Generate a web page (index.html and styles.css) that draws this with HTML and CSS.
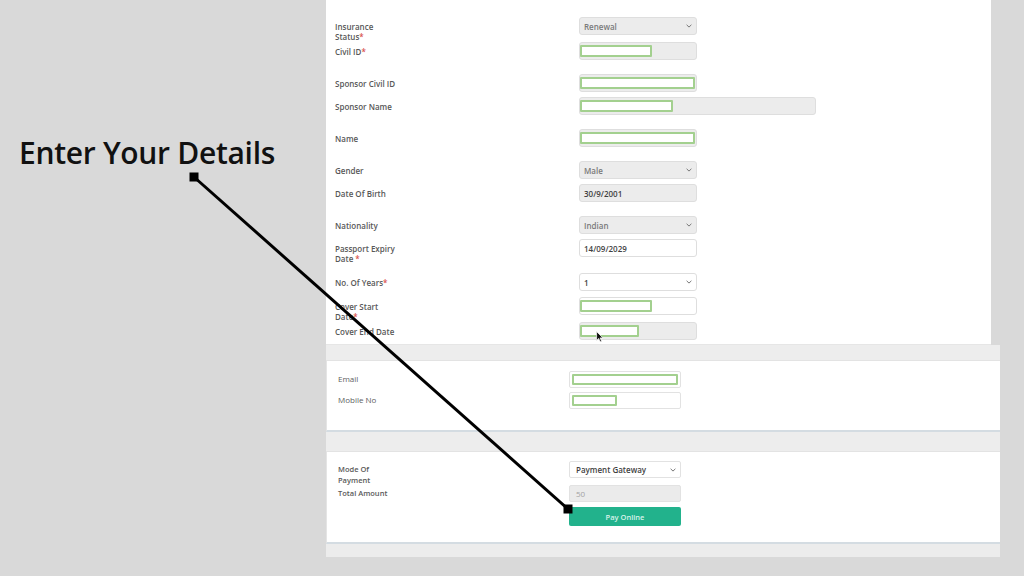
FILE: index.html
```html
<!DOCTYPE html>
<html lang="en">
<head>
<meta charset="utf-8">
<title>Insurance Renewal</title>
<link rel="stylesheet" href="styles.css">
</head>
<body>
<div class="screen">
  <aside class="note">
    <h1 class="note-title">Enter Your Details</h1>
  </aside>

  <main class="form-col">
    <section class="panel">
      <div class="row mb7">
        <label class="lbl">Insurance<br>Status<span class="req">*</span></label>
        <div class="field is-off"><span class="val muted">Renewal</span><svg class="chev" viewBox="0 0 6 4"><path d="M0.6 0.8 L3 3.1 L5.4 0.8"/></svg></div>
      </div>
      <div class="row mb14">
        <label class="lbl">Civil ID<span class="req">*</span></label>
        <div class="field is-off"><span class="fill w72"></span></div>
      </div>
      <div class="row mb5">
        <label class="lbl">Sponsor Civil ID</label>
        <div class="field is-off"><span class="fill w115"></span></div>
      </div>
      <div class="row mb14">
        <label class="lbl">Sponsor Name</label>
        <div class="field is-off wide"><span class="fill w93"></span></div>
      </div>
      <div class="row mb14">
        <label class="lbl">Name</label>
        <div class="field is-off"><span class="fill w115"></span></div>
      </div>
      <div class="row mb5">
        <label class="lbl">Gender</label>
        <div class="field is-off"><span class="val muted">Male</span><svg class="chev" viewBox="0 0 6 4"><path d="M0.6 0.8 L3 3.1 L5.4 0.8"/></svg></div>
      </div>
      <div class="row mb14">
        <label class="lbl">Date Of Birth</label>
        <div class="field is-off"><span class="val">30/9/2001</span></div>
      </div>
      <div class="row mb5">
        <label class="lbl">Nationality</label>
        <div class="field is-off"><span class="val muted">Indian</span><svg class="chev" viewBox="0 0 6 4"><path d="M0.6 0.8 L3 3.1 L5.4 0.8"/></svg></div>
      </div>
      <div class="row mb16">
        <label class="lbl">Passport Expiry<br>Date <span class="req">*</span></label>
        <div class="field"><span class="val">14/09/2029</span></div>
      </div>
      <div class="row mb6">
        <label class="lbl">No. Of Years<span class="req">*</span></label>
        <div class="field"><span class="val">1</span><svg class="chev" viewBox="0 0 6 4"><path d="M0.6 0.8 L3 3.1 L5.4 0.8"/></svg></div>
      </div>
      <div class="row mb7">
        <label class="lbl">Cover Start<br>Date<span class="req">*</span></label>
        <div class="field"><span class="fill w72"></span></div>
      </div>
      <div class="row">
        <label class="lbl">Cover End Date</label>
        <div class="field is-off"><span class="fill w59"></span></div>
      </div>
    </section>

    <section class="card">
      <div class="card-head"></div>
      <div class="card-body contact">
        <div class="crow mb4">
          <label class="clbl">Email</label>
          <div class="cfield"><span class="fill w106"></span></div>
        </div>
        <div class="crow">
          <label class="clbl">Mobile No</label>
          <div class="cfield"><span class="fill w45"></span></div>
        </div>
      </div>
    </section>

    <section class="card">
      <div class="card-head tall"></div>
      <div class="card-body payment">
        <div class="crow mb7">
          <label class="clbl strong">Mode Of<br>Payment</label>
          <div class="cfield"><span class="val">Payment Gateway</span><svg class="chev" viewBox="0 0 6 4"><path d="M0.6 0.8 L3 3.1 L5.4 0.8"/></svg></div>
        </div>
        <div class="crow mb5">
          <label class="clbl strong">Total Amount</label>
          <div class="cfield is-off"><span class="val faint">50</span></div>
        </div>
        <div class="crow btn-row">
          <span class="clbl"></span>
          <button class="pay-btn" type="button">Pay Online</button>
        </div>
      </div>
      <div class="card-foot"></div>
    </section>
  </main>

  <!-- callout connector from the title to the pay button -->
  <svg class="connector" viewBox="0 0 1024 576" width="1024" height="576">
    <line x1="194" y1="177" x2="568" y2="509" stroke="#000" stroke-width="3"/>
    <rect x="189.5" y="172.5" width="9" height="9" fill="#000"/>
    <rect x="563.5" y="504.5" width="9" height="9" fill="#000"/>
  </svg>

  <!-- mouse pointer -->
  <svg class="pointer" viewBox="0 0 8 12" width="8" height="12">
    <path d="M0.6 0.6 L0.6 9.4 L2.7 7.4 L4.2 10.8 L5.6 10.2 L4.1 6.9 L6.9 6.9 Z" fill="#111" stroke="#fff" stroke-width="0.7"/>
  </svg>
</div>
</body>
</html>
```

FILE: styles.css
```css
* { box-sizing: border-box; }

html, body {
  margin: 0;
  padding: 0;
}

body {
  width: 1024px;
  height: 576px;
  overflow: hidden;
  background: #d9d9d9;
  font-family: "Open Sans", "Noto Sans", sans-serif;
}

.screen {
  position: relative;
  width: 1024px;
  height: 576px;
  display: flex;
  align-items: flex-start;
}

/* left annotation column */
.note {
  flex: none;
  width: 326px;
}

.note-title {
  margin: 133px 0 0 19px;
  font-family: "Open Sans", "Noto Sans", sans-serif;
  font-weight: 600;
  font-size: 30px;
  line-height: 40px;
  letter-spacing: -0.3px;
  color: #111;
  white-space: nowrap;
}

/* right form column */
.form-col {
  flex: none;
  width: 674px;
  display: flex;
  flex-direction: column;
}

.panel {
  width: 665px;
  height: 345px;
  background: #fff;
  padding: 17px 0 0 9px;
  border-bottom: 1px solid #e6e6e6;
}

.row {
  display: grid;
  grid-template-columns: 244px auto;
  height: 18px;
  align-items: start;
}

.mb4 { margin-bottom: 4px; }
.mb5 { margin-bottom: 5px; }
.mb6 { margin-bottom: 6px; }
.mb7 { margin-bottom: 7px; }
.mb14 { margin-bottom: 14px; }
.mb16 { margin-bottom: 16px; }

.lbl {
  padding-top: 4.5px;
  font-size: 8px;
  line-height: 10.6px;
  font-weight: 600;
  color: #585858;
  white-space: nowrap;
}

.req { color: #d9534f; }

.field {
  position: relative;
  width: 118px;
  height: 18px;
  border: 1px solid #dedede;
  border-radius: 3px;
  background: #fff;
  display: flex;
  align-items: center;
  padding: 0;
}

.field.is-off { background: #ececec; }
.field.wide { width: 237px; }

.val {
  padding-left: 4px;
  font-size: 8px;
  font-weight: 600;
  color: #3f3f3f;
  white-space: nowrap;
}

.val.muted { color: #7a7a7a; }
.val.faint { color: #a3a3a3; font-weight: 400; }

.chev {
  position: absolute;
  right: 4px;
  top: 50%;
  width: 6px;
  height: 4px;
  margin-top: -2px;
  fill: none;
  stroke: #777;
  stroke-width: 1;
}

/* highlighted entry boxes inside the inputs */
.fill {
  display: block;
  height: 12px;
  border: 2px solid #a3d08f;
  border-radius: 1px;
  background: #fff;
}

.w45 { width: 45px; }
.w59 { width: 59px; }
.w72 { width: 72px; }
.w93 { width: 93px; }
.w106 { width: 106px; }
.w115 { width: 115px; }

/* lower cards */
.card {
  width: 674px;
  display: flex;
  flex-direction: column;
}

.card-head {
  height: 16px;
  background: #ededed;
  border-bottom: 1px solid #e3e3e3;
}

.card-head.tall { height: 20px; }

.card-body {
  background: #fff;
  border-left: 1px solid #e4e4e4;
  border-bottom: 2px solid #d4dce2;
  padding-left: 11px;
}

.card-body.contact {
  height: 71px;
  padding-top: 10px;
}

.card-body.payment {
  height: 92px;
  padding-top: 9px;
}

.card-foot {
  height: 13px;
  background: #ececec;
}

.crow {
  display: grid;
  grid-template-columns: 231px auto;
  height: 17px;
  align-items: start;
}

.crow.btn-row { height: 19px; }

.clbl {
  padding-top: 3.2px;
  font-size: 8px;
  line-height: 10.4px;
  color: #606060;
  white-space: nowrap;
}

.clbl.strong {
  font-size: 7.5px;
  font-weight: 600;
  color: #5a5a5a;
}

.cfield {
  position: relative;
  width: 112px;
  height: 17px;
  border: 1px solid #e2e2e2;
  border-radius: 2px;
  background: #fff;
  display: flex;
  align-items: center;
  padding-left: 2px;
}

.cfield.is-off { background: #ebebeb; }

.cfield .fill { height: 11px; }

.pay-btn {
  width: 112px;
  height: 19px;
  border: 0;
  border-radius: 2px;
  background: #22b28c;
  color: #d8f3ea;
  font-family: "Open Sans", sans-serif;
  font-weight: 600;
  font-size: 7.5px;
  padding: 0;
}

/* overlays */
.connector {
  position: absolute;
  left: 0;
  top: 0;
  pointer-events: none;
}

.pointer {
  position: absolute;
  left: 596px;
  top: 331px;
}
```
